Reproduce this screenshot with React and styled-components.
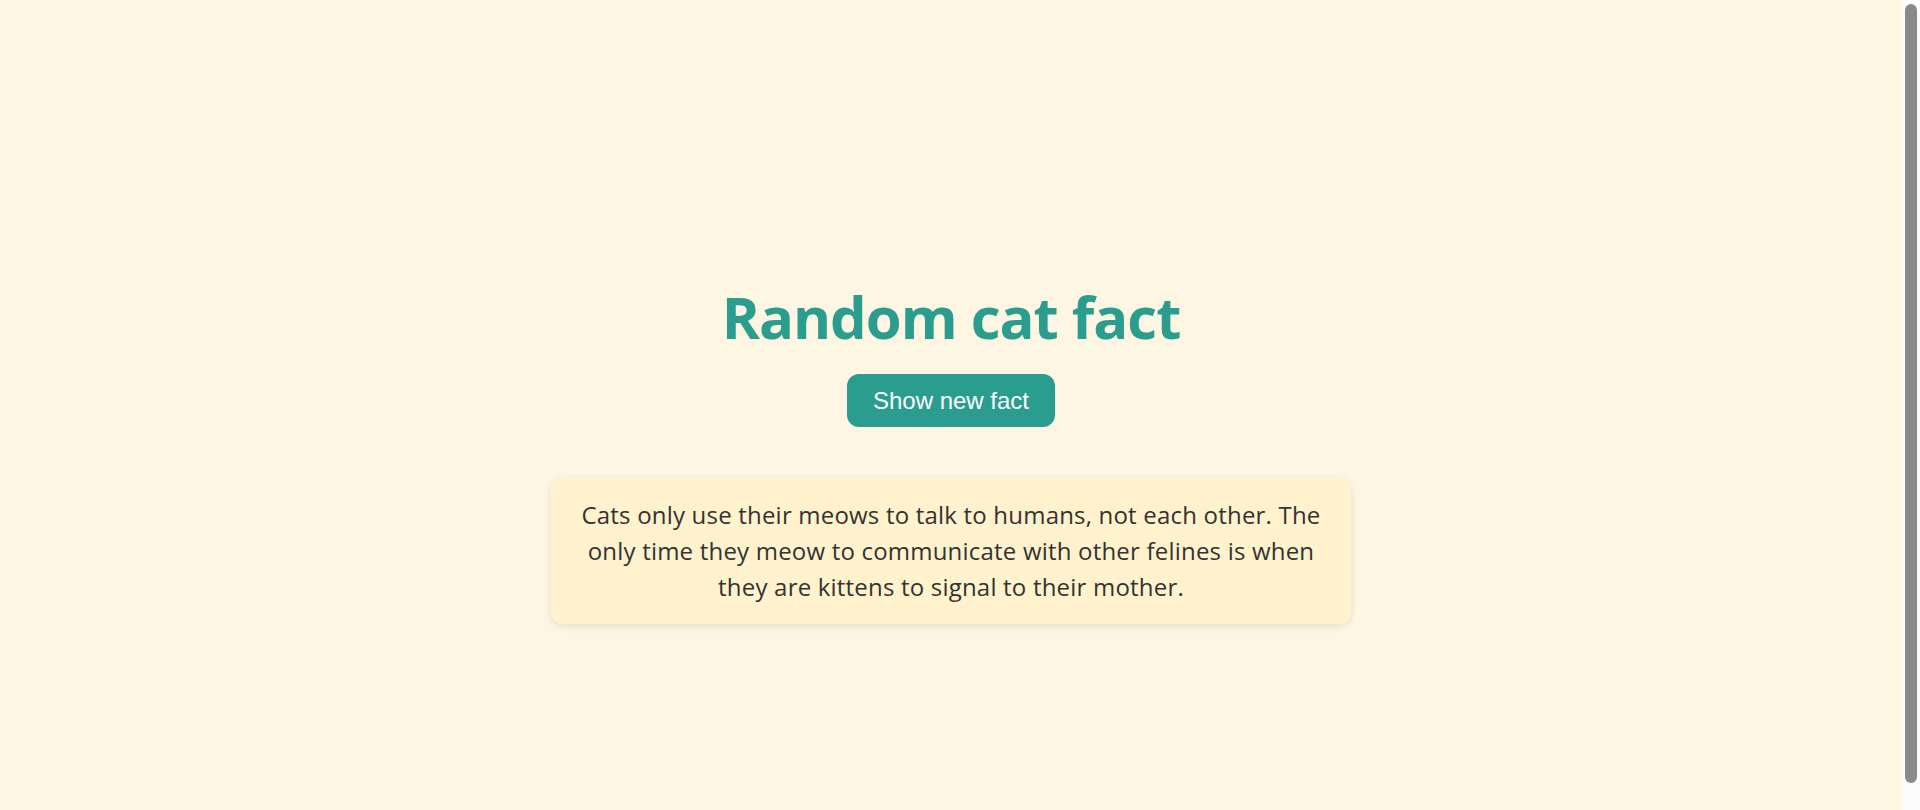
import React from 'react';
import styled, { createGlobalStyle } from 'styled-components';

const GlobalStyle = createGlobalStyle`
  html,
  body {
    margin: 0;
    height: 100%;
    overflow: hidden;
    background: #fdf6e3;
    font-family: 'Open Sans', 'Noto Sans', sans-serif;
  }
`;

const StyledShell = styled.div`
  height: 100vh;
  display: flex;
  background: #fdf6e3;
`;

const StyledPage = styled.main`
  flex: 1;
  box-sizing: border-box;
  padding-top: 88px;
  display: flex;
  flex-direction: column;
  align-items: center;
  justify-content: center;
`;

const StyledScrollTrack = styled.div`
  width: 18px;
  box-sizing: border-box;
  padding: 4px 3px 27px;
  display: flex;
  background: #fcfcfc;
`;

const StyledScrollThumb = styled.div`
  flex: 1;
  border-radius: 6px;
  background: #8a8a8a;
`;

const StyledTitle = styled.h1`
  margin: 0 0 15px;
  color: #2a9d8f;
  font-family: 'Open Sans', 'Noto Sans', sans-serif;
  font-size: 58px;
  line-height: 85px;
  font-weight: 700;
  letter-spacing: -1px;
`;

const StyledButton = styled.button`
  padding: 12px 26px;
  border: none;
  border-radius: 12px;
  background: #2a9d8f;
  color: #fff;
  font-family: 'Liberation Sans', Arial, sans-serif;
  font-size: 24px;
  line-height: 29px;
  cursor: pointer;
`;

const StyledFactCard = styled.p`
  width: 800px;
  box-sizing: border-box;
  margin: 51px 0 0;
  padding: 19px 24px;
  border-radius: 12px;
  background: #fff2cc;
  box-shadow: 0 2px 8px rgba(0, 0, 0, 0.1);
  color: #333;
  font-size: 24px;
  line-height: 36px;
  letter-spacing: 0.2px;
  text-align: center;
`;

const App = () => {
  return (
    <StyledShell>
      <GlobalStyle />
      <StyledPage>
        <StyledTitle>Random cat fact</StyledTitle>
        <StyledButton type='button'>Show new fact</StyledButton>
        <StyledFactCard>
          Cats only use their meows to talk to humans, not each other. The only
          time they meow to communicate with other felines is when they are
          kittens to signal to their mother.
        </StyledFactCard>
      </StyledPage>
      <StyledScrollTrack>
        <StyledScrollThumb />
      </StyledScrollTrack>
    </StyledShell>
  );
};

export default App;
